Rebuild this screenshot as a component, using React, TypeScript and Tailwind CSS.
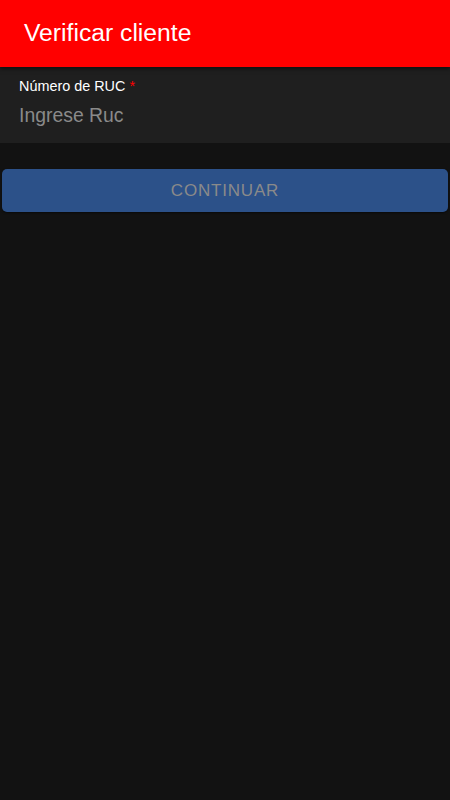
export default function App() {
  return (
    <div className="min-h-[800px] bg-[#121212] font-['Liberation_Sans',Arial,sans-serif]">
      <header className="relative z-10 h-[67px] bg-[#ff0000] flex items-center px-6 shadow-[0_2px_4px_rgba(0,0,0,0.5)]">
        <h1 className="text-white text-[24.7px] leading-none">Verificar cliente</h1>
      </header>
      <div className="bg-[#1f1f1f] h-[76px] px-[19px] pt-[10px]">
        <label className="block text-white text-[14.4px] leading-[18px]">
          Número de RUC <span className="text-[#ff0000]">*</span>
        </label>
        <input
          className="mt-[7px] w-full bg-transparent outline-none text-[19.4px] leading-[26px] text-white placeholder:text-[#8a8a8a]"
          placeholder="Ingrese Ruc"
        />
      </div>
      <div className="px-[2px] pt-[26px]">
        <button className="w-full h-[43px] rounded-[5px] bg-[#2c5189] text-[#8a8a8a] text-[17px] tracking-[0.8px] shadow-[0_1px_2px_rgba(0,0,0,0.5)]">
          CONTINUAR
        </button>
      </div>
    </div>
  );
}
